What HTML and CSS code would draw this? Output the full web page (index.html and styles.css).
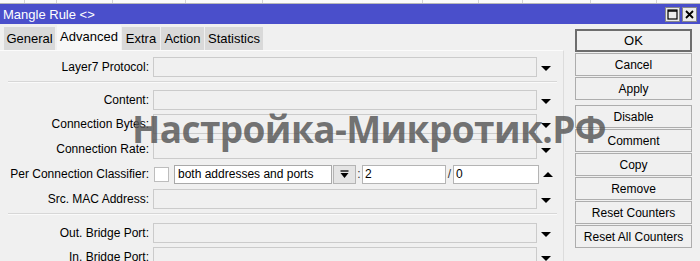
FILE: index.html
```html
<!DOCTYPE html>
<html lang="en">
<head>
  <meta charset="UTF-8">
  <title>Mangle Rule</title>
  <link rel="stylesheet" href="styles.css">
</head>
<body>
  <div class="strip">
    <span style="width:25px"></span><span style="width:32px"></span><span style="width:56px"></span>
    <span style="width:73px"></span><span style="width:77px"></span><span style="width:160px"></span>
    <span style="width:56px"></span><span style="width:44px"></span><span style="width:68px"></span>
    <span style="width:66px"></span>
  </div>
  <div class="titlebar">
    <span class="title">Mangle Rule &lt;&gt;</span>
    <div class="winbtns">
      <div class="winbtn">
        <svg width="11" height="11" viewBox="0 0 11 11"><rect x="1" y="1" width="9" height="9" fill="none" stroke="#000" stroke-width="1.2"/><line x1="1" y1="2" x2="10" y2="2" stroke="#000" stroke-width="1.5"/></svg>
      </div>
      <div class="winbtn">
        <svg width="11" height="11" viewBox="0 0 11 11"><path d="M2 2 L9 9 M9 2 L2 9" stroke="#000" stroke-width="1.8"/></svg>
      </div>
    </div>
  </div>

  <div class="main">
    <div class="left">
      <div class="tabs">
        <div class="tab" style="width:51px">General</div>
        <div class="tab active">Advanced</div>
        <div class="tab" style="width:38px">Extra</div>
        <div class="tab" style="width:43px">Action</div>
        <div class="tab" style="width:58px">Statistics</div>
      </div>
      <div class="panel">
        <div class="row">
          <label>Layer7 Protocol:</label>
          <div class="field"></div>
          <span class="arrow down"></span>
        </div>
        <div class="sep"></div>
        <div class="row">
          <label>Content:</label>
          <div class="field"></div>
          <span class="arrow down"></span>
        </div>
        <div class="row wide">
          <label>Connection Bytes:</label>
          <div class="field"></div>
          <span class="arrow down"></span>
        </div>
        <div class="row wide">
          <label>Connection Rate:</label>
          <div class="field"></div>
          <span class="arrow down"></span>
        </div>
        <div class="row wide">
          <label>Per Connection Classifier:</label>
          <div class="check"></div>
          <div class="select">
            <span class="select-text">both addresses and ports</span>
            <span class="select-btn">
              <svg width="9" height="9" viewBox="0 0 9 9"><line x1="0.5" y1="1" x2="8.5" y2="1" stroke="#000" stroke-width="1.3"/><path d="M0.5 3 L8.5 3 L4.5 8 Z" fill="#000"/></svg>
            </span>
          </div>
          <span class="punct">:</span>
          <div class="input">2</div>
          <span class="punct slash">/</span>
          <div class="input last">0</div>
          <span class="arrow up"></span>
        </div>
        <div class="row">
          <label>Src. MAC Address:</label>
          <div class="field"></div>
          <span class="arrow down"></span>
        </div>
        <div class="sep second"></div>
        <div class="row">
          <label>Out. Bridge Port:</label>
          <div class="field"></div>
          <span class="arrow down"></span>
        </div>
        <div class="row">
          <label>In. Bridge Port:</label>
          <div class="field"></div>
          <span class="arrow down"></span>
        </div>
      </div>
    </div>

    <div class="buttons">
      <button class="btn default">OK</button>
      <button class="btn">Cancel</button>
      <button class="btn">Apply</button>
      <button class="btn group">Disable</button>
      <button class="btn">Comment</button>
      <button class="btn">Copy</button>
      <button class="btn">Remove</button>
      <button class="btn">Reset Counters</button>
      <button class="btn">Reset All Counters</button>
    </div>
  </div>

  <div class="watermark">Настройка-Микротик.РФ</div>
</body>
</html>
```

FILE: styles.css
```css
* {
  margin: 0;
  padding: 0;
  box-sizing: border-box;
}
body {
  width: 700px;
  height: 261px;
  overflow: hidden;
  background: #f0f0f0;
  font-family: "Liberation Sans", Arial, sans-serif;
  font-size: 12px;
  color: #000;
  position: relative;
}
.strip {
  display: flex;
  height: 4px;
  background: #fbfbfb;
  border-bottom: 1px solid #b9b9b9;
}
.strip span {
  height: 100%;
  border-right: 1px solid #d4d4d4;
}
.titlebar {
  height: 20px;
  background: #4a4fcb;
  display: flex;
  align-items: center;
  justify-content: space-between;
  padding: 0 3px;
}
.title {
  color: #fff;
  font-size: 13px;
}
.winbtns {
  display: flex;
  gap: 2px;
}
.winbtn {
  width: 15px;
  height: 15px;
  background: #ececec;
  border: 1px solid #8a8a8a;
  display: flex;
  align-items: center;
  justify-content: center;
}
.main {
  display: flex;
  height: 237px;
  overflow: hidden;
}
.left {
  width: 564px;
}
.tabs {
  display: flex;
  height: 26px;
  padding-left: 4px;
  align-items: flex-end;
}
.tab {
  height: 23px;
  background: #d9d9d9;
  margin-right: 1px;
  display: flex;
  align-items: center;
  justify-content: center;
  font-size: 13px;
}
.tab.active {
  height: 25px;
  width: 64px;
  background: #f7f7f7;
  margin-left: 1px;
  padding-bottom: 3px;
}
.panel {
  border-top: 1px solid #fbfbfb;
  border-right: 1px solid #dcdcdc;
  height: 211px;
  overflow: hidden;
  padding: 6px 0 0 0;
}
.row {
  display: flex;
  align-items: center;
  height: 20px;
  margin-bottom: 4px;
}
.row.wide {
  margin-bottom: 5px;
}
.row label {
  width: 150px;
  text-align: right;
  padding-right: 1px;
  white-space: nowrap;
}
.field {
  margin-left: 3px;
  width: 384px;
  height: 20px;
  background: #f0f0f0;
  border: 1px solid #cbcbcb;
}
.arrow {
  width: 0;
  height: 0;
  margin-left: 4px;
  border-left: 5px solid transparent;
  border-right: 5px solid transparent;
}
.arrow.down {
  border-top: 5px solid #000;
  margin-top: 2px;
}
.arrow.up {
  border-bottom: 5px solid #000;
}
.sep {
  margin: 3px 6px 7px 8px;
  height: 2px;
  border-top: 1px solid #d7d7d7;
  border-bottom: 1px solid #fafafa;
}
.sep.second {
  margin-bottom: 8px;
}
.check {
  margin-left: 4px;
  width: 15px;
  height: 15px;
  background: #fff;
  border: 1px solid #bdbdbd;
}
.select {
  margin-left: 5px;
  width: 182px;
  height: 19px;
  display: flex;
}
.select-text {
  flex: 1;
  background: #fff;
  border: 1px solid #a9a9a9;
  padding-left: 3px;
  line-height: 17px;
}
.select-btn {
  width: 23px;
  margin-left: 1px;
  background: #e4e4e4;
  border: 1px solid #b4b4b4;
  display: flex;
  align-items: center;
  justify-content: center;
}
.punct {
  width: 6px;
  text-align: center;
  color: #333;
}
.slash {
  width: 7px;
}
.input {
  width: 84px;
  height: 19px;
  background: #fff;
  border: 1px solid #b4b4b4;
  padding-left: 2px;
  line-height: 17px;
}
.input.last {
  width: 86px;
}
.buttons {
  margin-left: 11px;
  padding-top: 5px;
  display: flex;
  flex-direction: column;
  gap: 1px;
}
.btn {
  width: 117px;
  height: 23px;
  background: #f0f0f0;
  border: 1px solid #adadad;
  font-family: "Liberation Sans", Arial, sans-serif;
  font-size: 12px;
  color: #000;
}
.btn.default {
  border: 2px solid #6d6d6d;
  font-size: 13px;
}
.btn.group {
  margin-top: 4px;
}
.watermark {
  position: absolute;
  left: 132px;
  top: 103px;
  font-family: "Open Sans", sans-serif;
  font-weight: 700;
  font-size: 37px;
  letter-spacing: -0.6px;
  color: rgba(85, 85, 85, 0.82);
  white-space: nowrap;
}
```
